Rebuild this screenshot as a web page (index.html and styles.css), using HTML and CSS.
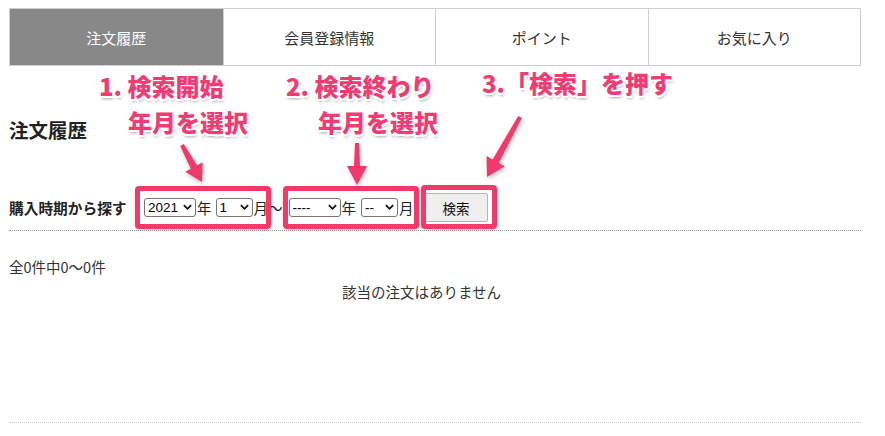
FILE: index.html
```html
<!DOCTYPE html>
<html lang="ja">
<head>
<meta charset="utf-8">
<link rel="stylesheet" href="styles.css">
</head>
<body>
<div class="page">
  <nav class="tabs">
    <div class="tab active">注文履歴</div>
    <div class="tab">会員登録情報</div>
    <div class="tab">ポイント</div>
    <div class="tab">お気に入り</div>
  </nav>

  <h2 class="heading">注文履歴</h2>

  <form class="search">
    <span class="search-label">購入時期から探す</span>
    <span class="sel sel-year"><select><option>2021</option></select><svg class="chev" viewBox="0 0 10 6"><path d="M1 1 L5 5 L9 1"/></svg></span>
    <span class="unit">年</span>
    <span class="sel sel-month"><select><option>1</option></select><svg class="chev" viewBox="0 0 10 6"><path d="M1 1 L5 5 L9 1"/></svg></span>
    <span class="unit">月</span>
    <span class="tilde">〜</span>
    <span class="sel sel-year2"><select><option>----</option></select><svg class="chev" viewBox="0 0 10 6"><path d="M1 1 L5 5 L9 1"/></svg></span>
    <span class="unit">年</span>
    <span class="sel sel-month2"><select><option>--</option></select><svg class="chev" viewBox="0 0 10 6"><path d="M1 1 L5 5 L9 1"/></svg></span>
    <span class="unit">月</span>
    <button type="button" class="btn">検索</button>
  </form>

  <div class="results">
    <p class="count">全0件中0〜0件</p>
    <p class="empty">該当の注文はありません</p>
  </div>
  <div class="bottom-rule"></div>

  <div class="note note1a">1. 検索開始</div>
  <div class="note note1b">年月を選択</div>
  <div class="note note2a">2. 検索終わり</div>
  <div class="note note2b">年月を選択</div>
  <div class="note note3">3.「検索」を押す</div>

  <div class="mark mark1"></div>
  <div class="mark mark2"></div>
  <div class="mark mark3"></div>

  <svg class="arrows" width="885" height="436" viewBox="0 0 885 436">
    <g fill="#f2396c">
      <polygon points="183.8,144 197,165.3 202.7,162.2 202,182 185.1,171.8 190.8,168.7 180.2,146"/>
      <polygon points="355,143 359,143 360,166 367,166 357,185 347,166 354,166"/>
      <polygon points="521.8,118 498.8,162.9 504.9,166.3 487,177 486.5,156.1 492.6,159.5 518.2,116"/>
    </g>
  </svg>
</div>
</body>
</html>
```
FILE: styles.css
```css
* { box-sizing: border-box; }
body {
  margin: 0;
  background: #fff;
  font-family: "Noto Sans CJK JP", "Noto Sans", sans-serif;
  color: #333;
}
.page {
  position: relative;
  width: 885px;
  height: 436px;
  padding: 8px 0 0 9px;
}
.tabs {
  display: grid;
  grid-template-columns: repeat(4, 1fr);
  width: 852px;
  height: 58px;
  border: 1px solid #cfcfcf;
}
.tab {
  display: flex;
  align-items: center;
  justify-content: center;
  font-size: 15px;
  color: #333;
  border-left: 1px solid #cfcfcf;
}
.tab:first-child { border-left: none; }
.tab.active {
  background: #888;
  color: #fff;
}
.heading {
  margin: 52px 0 0;
  font-size: 19.5px;
  line-height: 24px;
  font-weight: 700;
  color: #222;
}
.search {
  display: flex;
  align-items: center;
  height: 29px;
  margin-top: 51px;
  width: 852px;
}
.search-label {
  font-size: 14.7px;
  font-weight: 700;
  color: #222;
  width: 135px;
}
.sel {
  position: relative;
  display: inline-block;
  height: 19px;
}
.sel select {
  -webkit-appearance: none;
  appearance: none;
  height: 19px;
  border: 1px solid #767676;
  border-radius: 3px;
  background: #fff;
  font-family: "Liberation Sans", Arial, sans-serif;
  font-size: 13.5px;
  color: #000;
  padding: 0 0 0 3px;
  margin: 0;
  display: block;
}
.chev {
  position: absolute;
  right: 4px;
  top: 6px;
  width: 9px;
  height: 6px;
  fill: none;
  stroke: #111;
  stroke-width: 2;
  pointer-events: none;
}
.sel-year select { width: 52px; }
.sel-month { margin-left: 4px; }
.sel-month select { width: 37px; }
.sel-year2 { margin-left: 6px; }
.sel-year2 select { width: 52px; }
.sel-month2 { margin-left: 5px; }
.sel-month2 select { width: 37px; }
.unit {
  font-size: 14.5px;
  color: #222;
  margin-left: 1px;
}
.tilde {
  font-size: 14.5px;
  color: #222;
}
.btn {
  margin-left: 11px;
  width: 63px;
  height: 29px;
  background: #efefef;
  border: 1px solid #b5b5b5;
  border-radius: 2px;
  font-family: "Noto Sans CJK JP", sans-serif;
  font-size: 13.5px;
  color: #111;
  padding: 0;
}
.results {
  width: 852px;
  margin-top: 8px;
  border-top: 1px dotted #9a9a9a;
  height: 192px;
}
.count {
  margin: 26px 0 0;
  font-size: 14.5px;
  line-height: 20px;
  color: #333;
}
.empty {
  margin: 5px 0 0;
  font-size: 14.5px;
  line-height: 20px;
  color: #333;
  text-align: center;
  padding-right: 27px;
}
.bottom-rule {
  width: 852px;
  border-top: 1px dotted #c4c4c4;
}
.note {
  position: absolute;
  font-size: 24px;
  line-height: 28px;
  font-weight: 900;
  color: #ef3d74;
  white-space: nowrap;
  text-shadow:
    2px 0 0 #fff, -2px 0 0 #fff, 0 2px 0 #fff, 0 -2px 0 #fff,
    1.5px 1.5px 0 #fff, -1.5px -1.5px 0 #fff, 1.5px -1.5px 0 #fff, -1.5px 1.5px 0 #fff,
    1px 3px 3px rgba(0,0,0,0.35);
}
.note1a { left: 99px; top: 72px; }
.note1b { left: 128px; top: 108px; }
.note2a { left: 286px; top: 72px; }
.note2b { left: 318px; top: 108px; }
.note3 { left: 482px; top: 69px; }
.mark {
  position: absolute;
  border: 5px solid #f2396c;
  border-radius: 4px;
  box-shadow: 0 1px 3px rgba(0,0,0,0.2);
}
.mark1 { left: 135px; top: 186px; width: 136px; height: 43px; }
.mark2 { left: 283px; top: 186px; width: 136px; height: 43px; }
.mark3 { left: 421px; top: 185px; width: 76px; height: 44px; }
.arrows {
  position: absolute;
  left: 0;
  top: 0;
  pointer-events: none;
  filter: drop-shadow(1px 2px 2px rgba(0,0,0,0.25));
}
```
